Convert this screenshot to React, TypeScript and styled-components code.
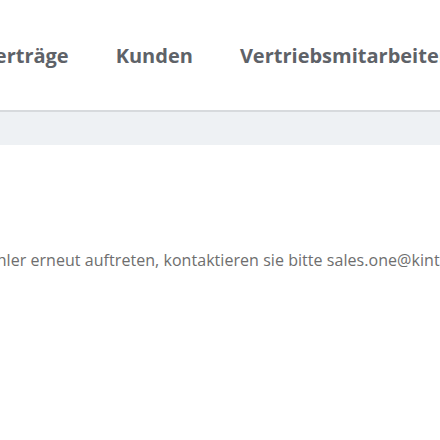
import styled, { createGlobalStyle } from "styled-components";

const NavItems = ["Dashboard", "Verträge", "Kunden", "Vertriebsmitarbeiter"];

export default function App() {
  return (
    <>
      <GlobalStyle />
      <Page>
        <Header>
          <NavList>
            {NavItems.map((item) => (
              <NavItem key={item}>{item}</NavItem>
            ))}
          </NavList>
        </Header>
        <SubBar />
        <Content>
          <Message>
            Sollte der Fehler erneut auftreten, kontaktieren sie bitte
            sales.one@kinto-mobility.de
          </Message>
        </Content>
      </Page>
    </>
  );
}

const GlobalStyle = createGlobalStyle`
  html, body {
    margin: 0;
    padding: 0;
    background: #fff;
    overflow: hidden;
  }
`;

const Page = styled.div`
  font-family: "Open Sans", "Noto Sans", sans-serif;
  width: 440px;
  height: 440px;
  overflow: hidden;
  background: #fff;
`;

const Header = styled.header`
  height: 110px;
  display: flex;
  align-items: center;
  border-bottom: 2px solid #d7dadd;
`;

const NavList = styled.nav`
  display: flex;
  align-items: center;
  gap: 47px;
  margin-left: -174px;
  white-space: nowrap;
`;

const NavItem = styled.a`
  font-size: 20px;
  font-weight: 700;
  color: #5e6268;
  text-decoration: none;
`;

const SubBar = styled.div`
  height: 33px;
  background: #eef1f4;
`;

const Content = styled.div`
  padding-top: 104px;
`;

const Message = styled.p`
  margin: 0 0 0 -96px;
  font-size: 16px;
  letter-spacing: 0.05px;
  color: #6e6e6e;
  white-space: nowrap;
`;
